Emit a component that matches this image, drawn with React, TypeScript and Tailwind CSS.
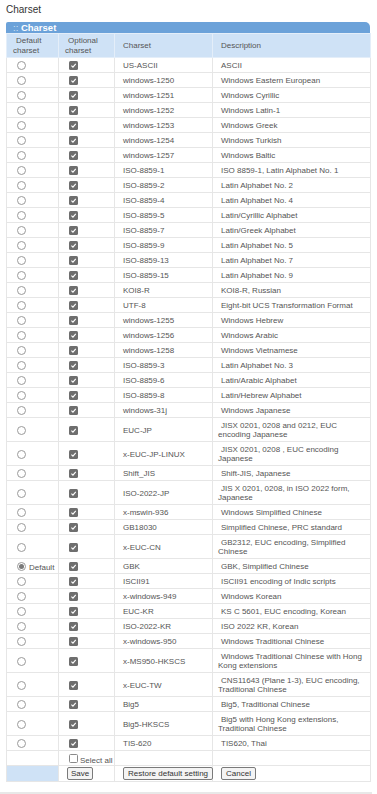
import { useState } from 'react'

const rows: { cs: string; desc: string[] }[] = [
  { cs: 'US-ASCII', desc: ['ASCII'] },
  { cs: 'windows-1250', desc: ['Windows Eastern European'] },
  { cs: 'windows-1251', desc: ['Windows Cyrillic'] },
  { cs: 'windows-1252', desc: ['Windows Latin-1'] },
  { cs: 'windows-1253', desc: ['Windows Greek'] },
  { cs: 'windows-1254', desc: ['Windows Turkish'] },
  { cs: 'windows-1257', desc: ['Windows Baltic'] },
  { cs: 'ISO-8859-1', desc: ['ISO 8859-1, Latin Alphabet No. 1'] },
  { cs: 'ISO-8859-2', desc: ['Latin Alphabet No. 2'] },
  { cs: 'ISO-8859-4', desc: ['Latin Alphabet No. 4'] },
  { cs: 'ISO-8859-5', desc: ['Latin/Cyrillic Alphabet'] },
  { cs: 'ISO-8859-7', desc: ['Latin/Greek Alphabet'] },
  { cs: 'ISO-8859-9', desc: ['Latin Alphabet No. 5'] },
  { cs: 'ISO-8859-13', desc: ['Latin Alphabet No. 7'] },
  { cs: 'ISO-8859-15', desc: ['Latin Alphabet No. 9'] },
  { cs: 'KOI8-R', desc: ['KOI8-R, Russian'] },
  { cs: 'UTF-8', desc: ['Eight-bit UCS Transformation Format'] },
  { cs: 'windows-1255', desc: ['Windows Hebrew'] },
  { cs: 'windows-1256', desc: ['Windows Arabic'] },
  { cs: 'windows-1258', desc: ['Windows Vietnamese'] },
  { cs: 'ISO-8859-3', desc: ['Latin Alphabet No. 3'] },
  { cs: 'ISO-8859-6', desc: ['Latin/Arabic Alphabet'] },
  { cs: 'ISO-8859-8', desc: ['Latin/Hebrew Alphabet'] },
  { cs: 'windows-31j', desc: ['Windows Japanese'] },
  { cs: 'EUC-JP', desc: ['JISX 0201, 0208 and 0212, EUC', 'encoding Japanese'] },
  { cs: 'x-EUC-JP-LINUX', desc: ['JISX 0201, 0208 , EUC encoding', 'Japanese'] },
  { cs: 'Shift_JIS', desc: ['Shift-JIS, Japanese'] },
  { cs: 'ISO-2022-JP', desc: ['JIS X 0201, 0208, in ISO 2022 form,', 'Japanese'] },
  { cs: 'x-mswin-936', desc: ['Windows Simplified Chinese'] },
  { cs: 'GB18030', desc: ['Simplified Chinese, PRC standard'] },
  { cs: 'x-EUC-CN', desc: ['GB2312, EUC encoding, Simplified', 'Chinese'] },
  { cs: 'GBK', desc: ['GBK, Simplified Chinese'] },
  { cs: 'ISCII91', desc: ['ISCII91 encoding of Indic scripts'] },
  { cs: 'x-windows-949', desc: ['Windows Korean'] },
  { cs: 'EUC-KR', desc: ['KS C 5601, EUC encoding, Korean'] },
  { cs: 'ISO-2022-KR', desc: ['ISO 2022 KR, Korean'] },
  { cs: 'x-windows-950', desc: ['Windows Traditional Chinese'] },
  { cs: 'x-MS950-HKSCS', desc: ['Windows Traditional Chinese with Hong', 'Kong extensions'] },
  { cs: 'x-EUC-TW', desc: ['CNS11643 (Plane 1-3), EUC encoding,', 'Traditional Chinese'] },
  { cs: 'Big5', desc: ['Big5, Traditional Chinese'] },
  { cs: 'Big5-HKSCS', desc: ['Big5 with Hong Kong extensions,', 'Traditional Chinese'] },
  { cs: 'TIS-620', desc: ['TIS620, Thai'] },
]

function Radio({ on }: { on: boolean }) {
  return (
    <span className="flex w-[9px] h-[9px] rounded-full border border-[#9a9a9a] bg-white items-center justify-center shrink-0">
      {on && <span className="w-[5px] h-[5px] rounded-full bg-[#7a7a7a]" />}
    </span>
  )
}

function Check({ on }: { on: boolean }) {
  return on ? (
    <span className="flex w-[9px] h-[9px] rounded-[1.5px] bg-[#6e6e6e] items-center justify-center shrink-0">
      <svg viewBox="0 0 10 10" className="w-[7px] h-[7px]">
        <path d="M2 5.2 4.2 7.3 8.2 2.6" fill="none" stroke="#fff" strokeWidth="1.6" />
      </svg>
    </span>
  ) : (
    <span className="block w-[9px] h-[9px] rounded-[1.5px] border border-[#8a8a8a] bg-white shrink-0" />
  )
}

const td = 'border border-[#e6e6e6] pt-[3px] pb-[2px] align-middle'

export default function App() {
  const [def, setDef] = useState('GBK')

  return (
    <div className="bg-white text-[#555] font-['Liberation_Sans',Arial,sans-serif] text-[8px] leading-[9px]">
      <div className="pl-[6px] pt-[2px] text-[10px] leading-[15px] text-[#333]">Charset</div>

      <div className="ml-[6px] mt-[5px] w-[364px]">
        <div className="h-[11px] bg-[#6ca2d9] rounded-tl-[2px] rounded-tr-[5px] pl-[7px] text-[9.5px] leading-[11px] font-bold text-white">
          <span className="font-normal text-[#d3e4f5]">::</span> Charset
        </div>
        <table className="w-[364px] border-collapse table-fixed">
          <colgroup>
            <col className="w-[52px]" />
            <col className="w-[56px]" />
            <col className="w-[98px]" />
            <col className="w-[158px]" />
          </colgroup>
          <thead>
            <tr className="bg-[#cfe2f6] leading-[10px] h-[24px]">
              <th className="border border-[#e4eef9] font-normal text-left pl-[6px] py-[1px] indent-[3px]">Default charset</th>
              <th className="border border-[#e4eef9] font-normal text-left pl-[6px] pr-[14px] py-[1px] indent-[3px]">Optional charset</th>
              <th className="border border-[#e4eef9] font-normal text-left pl-[8px]">Charset</th>
              <th className="border border-[#e4eef9] font-normal text-left pl-[8px]">Description</th>
            </tr>
          </thead>
          <tbody>
            {rows.map(r => (
              <tr key={r.cs}>
                <td className={`${td} pl-[10px]`} onClick={() => setDef(r.cs)}>
                  <div className="flex items-center h-[9px] whitespace-nowrap">
                    <Radio on={def === r.cs} />
                    {def === r.cs && <span className="ml-[3px] relative top-[1px]">Default</span>}
                  </div>
                </td>
                <td className={`${td} pl-[10px]`}>
                  <div className="flex items-center h-[9px]">
                    <Check on />
                  </div>
                </td>
                <td className={`${td} pl-[8px] whitespace-nowrap`}>{r.cs}</td>
                <td className={`${td} pl-[5px] whitespace-nowrap`}>
                  {r.desc.map((l, i) => (
                    <div key={i} className={i === 0 ? 'pl-[3px]' : ''}>{l}</div>
                  ))}
                </td>
              </tr>
            ))}
            <tr>
              <td className={td} />
              <td className={`${td} pl-[10px]`}>
                <div className="flex items-start h-[9px] whitespace-nowrap">
                  <Check on={false} />
                  <span className="ml-[2px] relative top-[2px]">Select all</span>
                </div>
              </td>
              <td className={td} />
              <td className={td} />
            </tr>
            <tr className="h-[16px]">
              <td className="border border-[#e6e6e6] bg-[#cfe2f6]" />
              <td className="border border-[#e6e6e6] pl-[8px]">
                <div className="flex">
                  <button className="h-[13px] px-[3px] border border-[#7a7a7a] rounded-[2px] bg-[#f4f4f4] text-[#333] leading-[11px]">Save</button>
                </div>
              </td>
              <td className="border border-[#e6e6e6] pl-[8px]">
                <div className="flex">
                  <button className="h-[13px] px-[4px] border border-[#7a7a7a] rounded-[2px] bg-[#f4f4f4] text-[#333] leading-[11px] whitespace-nowrap">Restore default setting</button>
                </div>
              </td>
              <td className="border border-[#e6e6e6] pl-[8px]">
                <div className="flex">
                  <button className="h-[13px] px-[4px] border border-[#7a7a7a] rounded-[2px] bg-[#f4f4f4] text-[#333] leading-[11px]">Cancel</button>
                </div>
              </td>
            </tr>
          </tbody>
        </table>
      </div>

      <div className="mt-[10px] w-[372px] h-[10px] bg-[#e8e8e8]" />
    </div>
  )
}
